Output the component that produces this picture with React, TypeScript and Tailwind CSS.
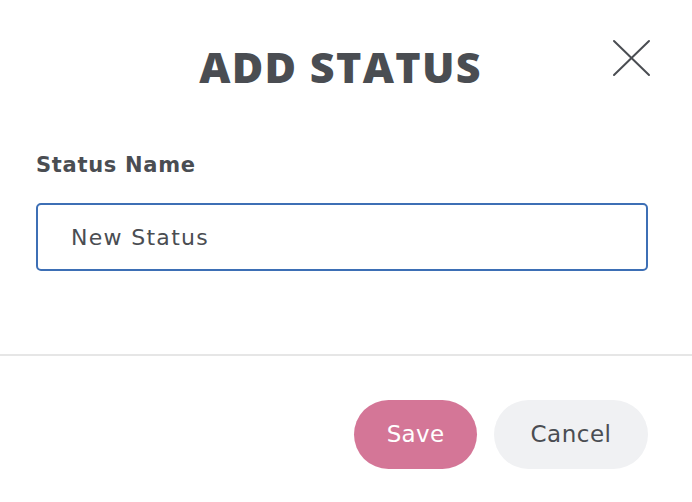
export default function App() {
  return (
    <div
      className="w-[692px] h-[502px] bg-white flex flex-col text-[#4a4d52]"
      style={{ fontFamily: '"DejaVu Sans", "Open Sans", sans-serif' }}
    >
      <div className="relative h-[125px] flex justify-center pr-[11px]">
        <h1 className="mt-[37px] font-['Open_Sans',sans-serif] text-[43px] font-extrabold tracking-[1.3px] leading-[60px]">
          ADD STATUS
        </h1>
        <button className="absolute left-[612px] top-[39px] text-[#4a4d52]" aria-label="Close">
          <svg width="39" height="38" viewBox="0 0 39 38" fill="none" stroke="currentColor" strokeWidth="2" strokeLinecap="round">
            <path d="M2 2 L37 36" />
            <path d="M37 2 L2 36" />
          </svg>
        </button>
      </div>

      <div className="pl-[36px] pr-[44px] h-[229px]">
        <label className="block text-[21px] font-bold tracking-[0.7px] leading-[28px] mt-[26px]">Status Name</label>
        <input
          className="mt-[24px] w-full h-[68px] rounded-[5px] border-2 border-[#3d6fb5] px-[33px] text-[22px] tracking-[1.3px] text-[#4a4d52] outline-none"
          defaultValue="New Status"
        />
      </div>

      <div className="border-t-2 border-[#e6e6e6]" />

      <div className="flex justify-end gap-[17px] pr-[44px] pt-[44px]">
        <button className="w-[123px] h-[69px] rounded-full bg-[#d47697] text-white text-[23px] tracking-[0.3px]">Save</button>
        <button className="w-[154px] h-[69px] rounded-full bg-[#f0f1f3] text-[#4a4d52] text-[23px] tracking-[0.5px]">Cancel</button>
      </div>
    </div>
  )
}
